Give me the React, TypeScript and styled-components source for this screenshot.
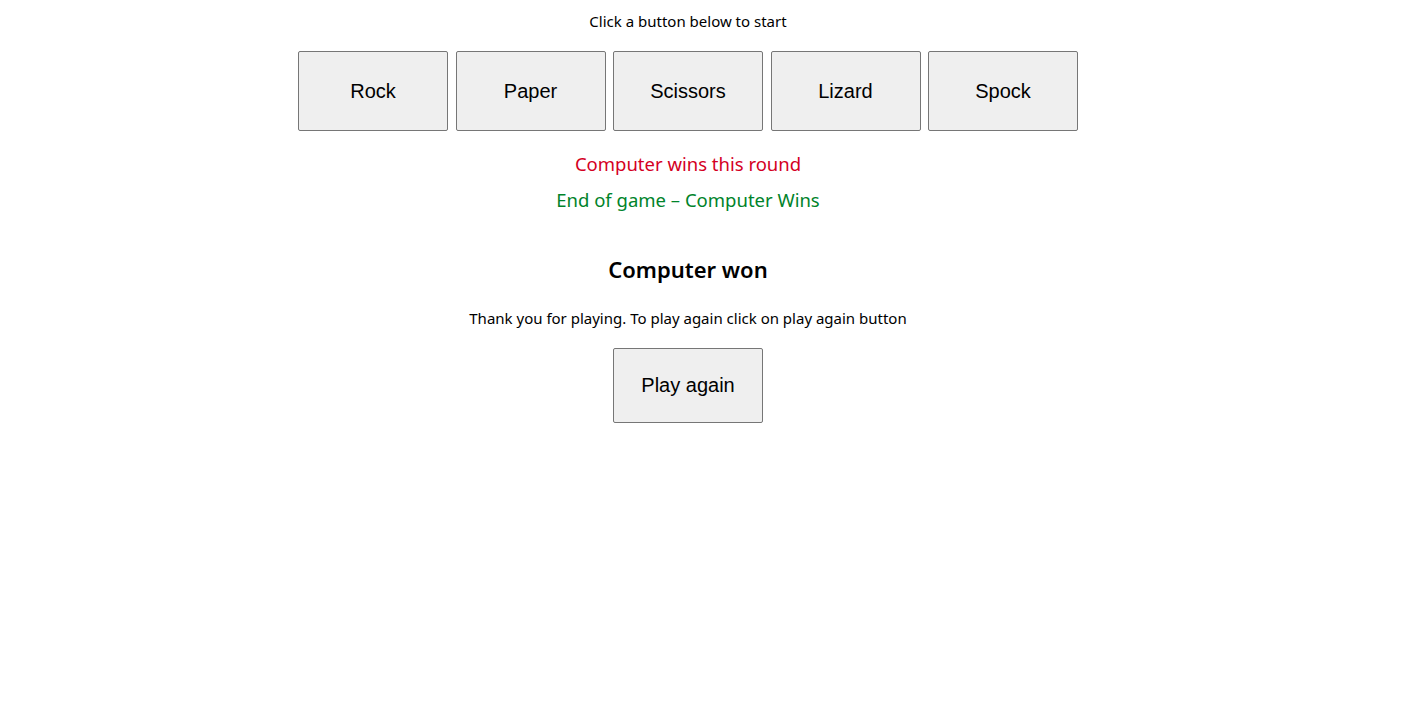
import * as React from "react";
import styled, { createGlobalStyle } from "styled-components";

const GlobalStyle = createGlobalStyle`
  body {
    margin: 0;
    background: #ffffff;
    font-family: "Noto Sans", "Open Sans", sans-serif;
  }
`;

const choices = ["Rock", "Paper", "Scissors", "Lizard", "Spock"];

const App: React.FC = () => {
  return (
    <>
      <GlobalStyle />
      <Page>
        <Prompt>Click a button below to start</Prompt>
        <ChoiceRow>
          {choices.map((c) => (
            <GameButton key={c}>{c}</GameButton>
          ))}
        </ChoiceRow>
        <Messages>
          <Message color="#d4001f">Computer wins this round</Message>
          <Message color="#00832a">End of game – Computer Wins</Message>
        </Messages>
        <Result>Computer won</Result>
        <Thanks>Thank you for playing. To play again click on play again button</Thanks>
        <GameButton $short>Play again</GameButton>
      </Page>
    </>
  );
};

const Page = styled.div`
  width: 1376px;
  display: flex;
  flex-direction: column;
  align-items: center;
  text-align: center;
  color: #000;
`;

const Prompt = styled.p`
  margin: 11px 0 0;
  font-size: 15px;
  line-height: 20px;
`;

const ChoiceRow = styled.div`
  display: flex;
  gap: 7.5px;
  margin-top: 20px;
`;

const GameButton = styled.button<{ $short?: boolean }>`
  width: 150px;
  height: ${(p) => (p.$short ? "75px" : "80px")};
  background: #efefef;
  border: 1px solid #767676;
  border-radius: 2px;
  font-family: "Liberation Sans", Arial, sans-serif;
  font-size: 20px;
  color: #000;
  padding: 0;
`;

const Messages = styled.div`
  margin-top: 15px;
`;

const Message = styled.p<{ color: string }>`
  margin: 0;
  color: ${(p) => p.color};
  font-size: 18.5px;
  line-height: 36px;
`;

const Result = styled.h2`
  margin: 36px 0 0;
  font-size: 22px;
  font-weight: 600;
  line-height: 30px;
`;

const Thanks = styled.p`
  margin: 24px 0 20px;
  font-size: 15px;
  line-height: 20px;
`;

export default App;
